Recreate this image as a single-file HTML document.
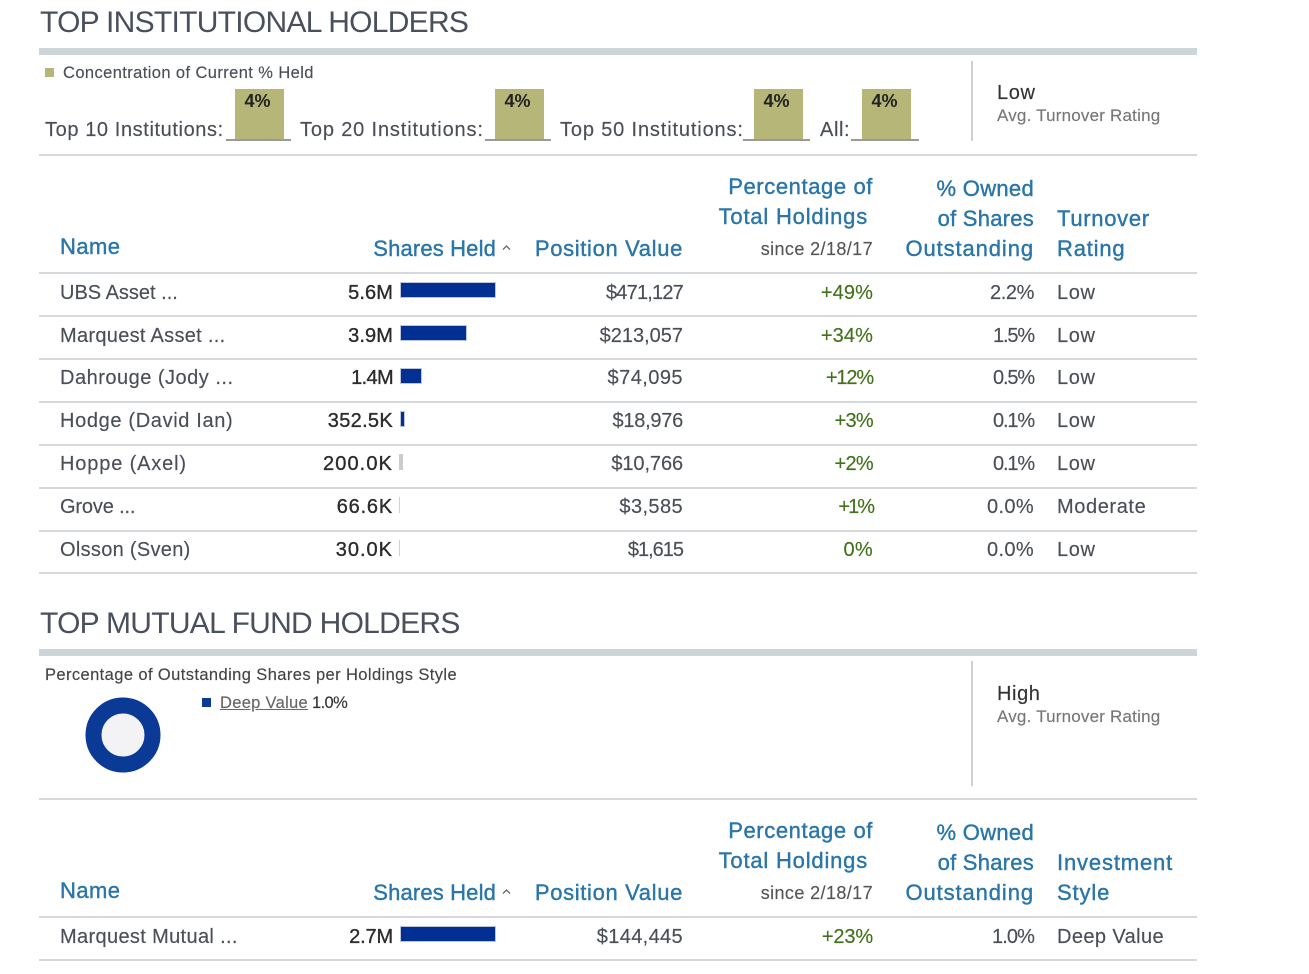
<!DOCTYPE html>
<html><head><meta charset="utf-8"><style>
html,body{margin:0;padding:0;background:#fff}
body{width:1309px;height:974px;position:relative;overflow:hidden;font-family:"Liberation Sans",sans-serif;color:#4a4e57}
.t{position:absolute;white-space:nowrap;line-height:24px;height:24px;font-size:20px;letter-spacing:.6px;margin-top:1px;-webkit-text-stroke:.15px currentColor}
.r{text-align:right}
.h{font-size:30px;line-height:36px;height:36px;color:#4a4f5c;letter-spacing:-.72px;left:40px;-webkit-text-stroke:0}
.b{color:#2a76a8;font-size:22px;letter-spacing:.45px;-webkit-text-stroke:.4px #2a76a8}
.s{font-size:18px;letter-spacing:.4px}
.d{color:#2b2b2b;font-size:20px;-webkit-text-stroke:.35px #2b2b2b}
.g{color:#42711a}
.l{position:absolute;left:39px;width:1158px;height:2px;background:#d5d9dc}
.hb{position:absolute;left:39px;width:1158px;height:7px;background:#ccd6d8}
.o{position:absolute;width:45px;padding-right:4px;height:50px;background:#b6b678;font-weight:bold;font-size:18px;text-align:center;color:#222;line-height:25px}
.u{position:absolute;height:2px;background:#9a9a9a}
.bar{position:absolute;left:401px;height:14px;background:#022f92;box-shadow:0 0 0 1px #bcc5dc}
.v{position:absolute;width:1px;background:#d0d0d0}
</style></head><body>
<div class="t h" style="top:4px">TOP INSTITUTIONAL HOLDERS</div>
<div class="hb" style="top:48px"></div>
<div style="position:absolute;left:45px;top:68px;width:9px;height:9px;background:#b6b678"></div>
<div class="t s" style="left:63px;top:60px;font-size:16.5px">Concentration of Current % Held</div>
<div class="t" style="left:45px;top:117px">Top 10 Institutions:</div>
<div class="o" style="left:235px;top:89px">4%</div><div class="u" style="left:226px;top:139px;width:65px"></div>
<div class="t" style="left:300px;top:117px;letter-spacing:.85px">Top 20 Institutions:</div>
<div class="o" style="left:495px;top:89px">4%</div><div class="u" style="left:485px;top:139px;width:66px"></div>
<div class="t" style="left:560px;top:117px;letter-spacing:.85px">Top 50 Institutions:</div>
<div class="o" style="left:754px;top:89px">4%</div><div class="u" style="left:743px;top:139px;width:67px"></div>
<div class="t" style="left:820px;top:117px">All:</div>
<div class="o" style="left:862px;top:89px">4%</div><div class="u" style="left:851px;top:139px;width:68px"></div>
<div class="v" style="left:971px;top:61px;height:80px;width:2px"></div>
<div class="t" style="left:997px;top:80px;color:#333">Low</div>
<div class="t s" style="left:997px;top:103px;color:#777;font-size:17px;letter-spacing:.2px">Avg. Turnover Rating</div>
<div class="l" style="top:154px"></div>

<div class="t b" style="left:60px;top:234px">Name</div>
<div class="t b r" style="right:813px;top:236px;letter-spacing:.15px">Shares Held</div>
<svg style="position:absolute;left:501px;top:244px" width="11" height="7"><path d="M2 5.5L5.5 2L9 5.5" fill="none" stroke="#666" stroke-width="1.3"/></svg>
<div class="t b r" style="right:626px;top:236px;letter-spacing:.65px">Position Value</div>
<div class="t b r" style="right:436px;top:174px;letter-spacing:.6px">Percentage of</div>
<div class="t b r" style="right:441px;top:204px;letter-spacing:.8px">Total Holdings</div>
<div class="t s r" style="right:436px;top:236px;color:#555">since 2/18/17</div>
<div class="t b r" style="right:275px;top:176px;letter-spacing:.3px">% Owned</div>
<div class="t b r" style="right:275px;top:206px;letter-spacing:.25px">of Shares</div>
<div class="t b r" style="right:275px;top:236px;letter-spacing:.9px">Outstanding</div>
<div class="t b" style="left:1057px;top:206px;letter-spacing:.7px">Turnover</div>
<div class="t b" style="left:1057px;top:236px;letter-spacing:.8px">Rating</div>
<div class="l" style="top:272px"></div>

<div class="t" style="left:60px;top:280px;letter-spacing:0">UBS Asset ...</div><div class="t d r" style="right:916px;top:280px;letter-spacing:.1px">5.6M</div><div class="bar" style="top:283px;width:94px"></div><div class="t r" style="right:626px;top:280px;letter-spacing:-.8px">$471,127</div><div class="t g r" style="right:436px;top:280px;letter-spacing:.1px">+49%</div><div class="t r" style="right:275px;top:280px;letter-spacing:-.4px">2.2%</div><div class="t" style="left:1057px;top:280px">Low</div>
<div class="l" style="top:315px"></div>
<div class="t" style="left:60px;top:323px;letter-spacing:.3px">Marquest Asset ...</div><div class="t d r" style="right:916px;top:323px;letter-spacing:.1px">3.9M</div><div class="bar" style="top:326px;width:65px"></div><div class="t r" style="right:626px;top:323px;letter-spacing:0">$213,057</div><div class="t g r" style="right:436px;top:323px;letter-spacing:.1px">+34%</div><div class="t r" style="right:275px;top:323px;letter-spacing:-1.15px">1.5%</div><div class="t" style="left:1057px;top:323px">Low</div>
<div class="l" style="top:358px"></div>
<div class="t" style="left:60px;top:365px;letter-spacing:.5px">Dahrouge (Jody ...</div><div class="t d r" style="right:916px;top:365px;letter-spacing:-.65px">1.4M</div><div class="bar" style="top:369px;width:20px"></div><div class="t r" style="right:626px;top:365px;letter-spacing:.45px">$74,095</div><div class="t g r" style="right:436px;top:365px;letter-spacing:-1.15px">+12%</div><div class="t r" style="right:275px;top:365px;letter-spacing:-1.15px">0.5%</div><div class="t" style="left:1057px;top:365px">Low</div>
<div class="l" style="top:401px"></div>
<div class="t" style="left:60px;top:408px;letter-spacing:.65px">Hodge (David Ian)</div><div class="t d r" style="right:916px;top:408px;letter-spacing:.3px">352.5K</div><div class="bar" style="top:412px;width:3px"></div><div class="t r" style="right:626px;top:408px;letter-spacing:-.25px">$18,976</div><div class="t g r" style="right:436px;top:408px;letter-spacing:-.7px">+3%</div><div class="t r" style="right:275px;top:408px;letter-spacing:-1.15px">0.1%</div><div class="t" style="left:1057px;top:408px">Low</div>
<div class="l" style="top:444px"></div>
<div class="t" style="left:60px;top:451px;letter-spacing:.85px">Hoppe (Axel)</div><div class="t d r" style="right:916px;top:451px;letter-spacing:1.1px">200.0K</div><div style="position:absolute;left:399px;top:454px;width:4px;height:16px;background:#ccc"></div><div class="t r" style="right:626px;top:451px;letter-spacing:-.1px">$10,766</div><div class="t g r" style="right:436px;top:451px;letter-spacing:-.7px">+2%</div><div class="t r" style="right:275px;top:451px;letter-spacing:-1.15px">0.1%</div><div class="t" style="left:1057px;top:451px">Low</div>
<div class="l" style="top:487px"></div>
<div class="t" style="left:60px;top:494px;letter-spacing:-.15px">Grove ...</div><div class="t d r" style="right:916px;top:494px;letter-spacing:.8px">66.6K</div><div class="v" style="left:399px;top:497px;height:16px"></div><div class="t r" style="right:626px;top:494px;letter-spacing:.4px">$3,585</div><div class="t g r" style="right:436px;top:494px;letter-spacing:-2px">+1%</div><div class="t r" style="right:275px;top:494px;letter-spacing:.35px">0.0%</div><div class="t" style="left:1057px;top:494px">Moderate</div>
<div class="l" style="top:530px"></div>
<div class="t" style="left:60px;top:537px;letter-spacing:.3px">Olsson (Sven)</div><div class="t d r" style="right:916px;top:537px;letter-spacing:1px">30.0K</div><div class="v" style="left:399px;top:540px;height:16px"></div><div class="t r" style="right:626px;top:537px;letter-spacing:-1px">$1,615</div><div class="t g r" style="right:436px;top:537px;letter-spacing:.3px">0%</div><div class="t r" style="right:275px;top:537px;letter-spacing:.35px">0.0%</div><div class="t" style="left:1057px;top:537px">Low</div>
<div class="l" style="top:572px"></div>

<div class="t h" style="top:605px">TOP MUTUAL FUND HOLDERS</div>
<div class="hb" style="top:649px"></div>
<div class="t s" style="left:45px;top:662px;font-size:16.5px;color:#444">Percentage of Outstanding Shares per Holdings Style</div>
<svg style="position:absolute;left:85px;top:697px" width="76" height="76"><circle cx="38" cy="38" r="29.5" fill="#f3f3f6" stroke="#0a3a96" stroke-width="16"/></svg>
<div style="position:absolute;left:202px;top:698px;width:9px;height:9px;background:#0a3a96"></div>
<div class="t s" style="left:220px;top:690px;font-size:16.5px;color:#666;text-decoration:underline;letter-spacing:.3px">Deep Value</div>
<div class="t s" style="left:312px;top:690px;font-size:16.5px;color:#333;letter-spacing:-.6px">1.0%</div>
<div class="v" style="left:971px;top:661px;height:125px;width:2px"></div>
<div class="t" style="left:997px;top:681px;color:#333">High</div>
<div class="t s" style="left:997px;top:704px;color:#777;font-size:17px;letter-spacing:.2px">Avg. Turnover Rating</div>
<div class="l" style="top:798px"></div>

<div class="t b" style="left:60px;top:878px">Name</div>
<div class="t b r" style="right:813px;top:880px;letter-spacing:.15px">Shares Held</div>
<svg style="position:absolute;left:501px;top:888px" width="11" height="7"><path d="M2 5.5L5.5 2L9 5.5" fill="none" stroke="#666" stroke-width="1.3"/></svg>
<div class="t b r" style="right:626px;top:880px;letter-spacing:.65px">Position Value</div>
<div class="t b r" style="right:436px;top:818px;letter-spacing:.6px">Percentage of</div>
<div class="t b r" style="right:441px;top:848px;letter-spacing:.8px">Total Holdings</div>
<div class="t s r" style="right:436px;top:880px;color:#555">since 2/18/17</div>
<div class="t b r" style="right:275px;top:820px;letter-spacing:.3px">% Owned</div>
<div class="t b r" style="right:275px;top:850px;letter-spacing:.25px">of Shares</div>
<div class="t b r" style="right:275px;top:880px;letter-spacing:.9px">Outstanding</div>
<div class="t b" style="left:1057px;top:850px;letter-spacing:.85px">Investment</div>
<div class="t b" style="left:1057px;top:880px;letter-spacing:.85px">Style</div>
<div class="l" style="top:916px"></div>
<div class="t" style="left:60px;top:924px;letter-spacing:.35px">Marquest Mutual ...</div><div class="t d r" style="right:916px;top:924px;letter-spacing:-.15px">2.7M</div><div class="bar" style="top:927px;width:94px"></div><div class="t r" style="right:626px;top:924px;letter-spacing:.35px">$144,445</div><div class="t g r" style="right:436px;top:924px;letter-spacing:-.15px">+23%</div><div class="t r" style="right:275px;top:924px;letter-spacing:-.9px">1.0%</div><div class="t" style="left:1057px;top:924px;letter-spacing:.4px">Deep Value</div>
<div class="l" style="top:959px"></div>
</body></html>
